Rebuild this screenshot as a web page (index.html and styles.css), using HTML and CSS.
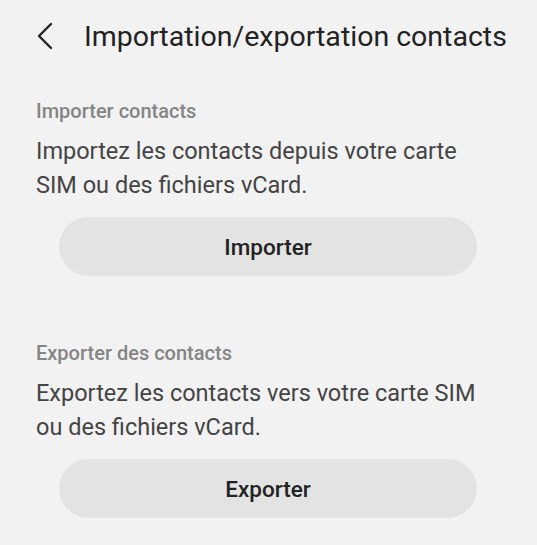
FILE: index.html
```html
<!DOCTYPE html>
<html lang="fr">
<head>
  <meta charset="UTF-8">
  <meta name="viewport" content="width=device-width, initial-scale=1.0">
  <title>Importation/exportation contacts</title>
  <link rel="stylesheet" href="styles.css">
</head>
<body>
  <header class="top-bar">
    <button class="back-btn" aria-label="Retour">
      <svg width="18" height="28" viewBox="0 0 18 28">
        <path d="M15 2 L3 14 L15 26" fill="none" stroke="#222" stroke-width="2.4" stroke-linecap="round" stroke-linejoin="round"/>
      </svg>
    </button>
    <h1>Importation/exportation contacts</h1>
  </header>

  <section class="block">
    <h2>Importer contacts</h2>
    <p>Importez les contacts depuis votre carte SIM ou des fichiers vCard.</p>
    <button class="action-btn">Importer</button>
  </section>

  <section class="block">
    <h2>Exporter des contacts</h2>
    <p>Exportez les contacts vers votre carte SIM ou des fichiers vCard.</p>
    <button class="action-btn">Exporter</button>
  </section>
</body>
</html>
```

FILE: styles.css
```css
body {
  font-family: Roboto, "Noto Sans", sans-serif;
  margin: 0;
  padding: 0;
  background-color: #f2f2f2;
  color: #222;
}

.top-bar {
  display: flex;
  align-items: center;
  height: 72px;
  padding-left: 36px;
}

.back-btn {
  background: none;
  border: none;
  padding: 0;
  width: 18px;
  height: 28px;
  display: flex;
  cursor: pointer;
}

.top-bar h1 {
  margin: 0 0 0 30px;
  font-size: 28.5px;
  font-weight: 400;
  color: #222;
}

.block {
  padding: 26px 36px 0 36px;
}

.block + .block {
  padding-top: 64px;
}

.block h2 {
  margin: 0;
  font-size: 20px;
  font-weight: 500;
  color: #858585;
  line-height: 26px;
}

.block p {
  margin: 10px 0 0 0;
  font-size: 23.5px;
  line-height: 34px;
  color: #444;
  max-width: 452px;
}

.action-btn {
  display: block;
  margin: 15px 0 0 23px;
  width: 418px;
  height: 59px;
  border: none;
  border-radius: 30px;
  background: #e3e3e3;
  font-family: inherit;
  font-size: 22.5px;
  font-weight: 500;
  color: #222;
  cursor: pointer;
}
```
